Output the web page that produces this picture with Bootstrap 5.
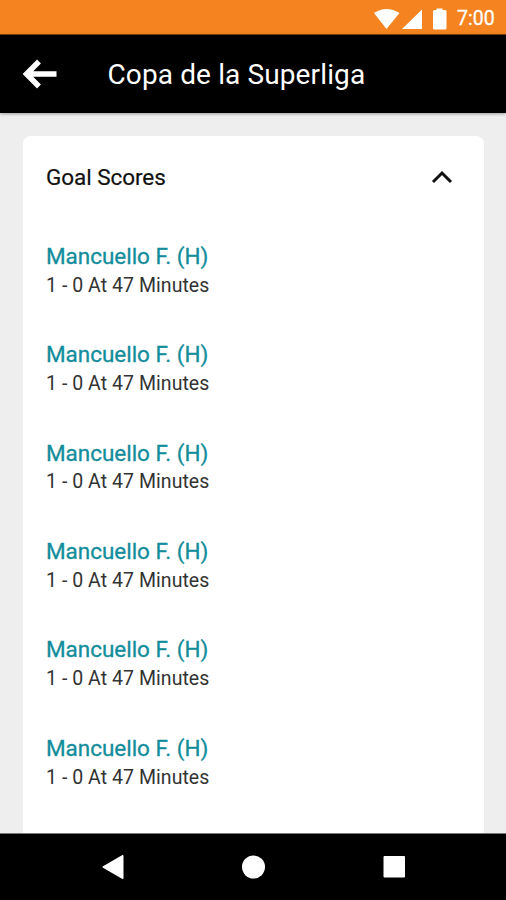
<!DOCTYPE html>
<html lang="en">
<head>
<meta charset="utf-8">
<meta name="viewport" content="width=device-width, initial-scale=1">
<title>Copa de la Superliga</title>
<link href="https://cdn.jsdelivr.net/npm/bootstrap@5.3.0/dist/css/bootstrap.min.css" rel="stylesheet">
<style>
body{font-family:Roboto,"Liberation Sans",sans-serif;background:#eee;height:900px;overflow:hidden}
svg{display:block;flex:none}
.status-bar{height:35px;background:#f58420;border-bottom:1px solid #7c430f;padding:1px 10px 0 0}
.status-bar .clock{font-size:19.5px;line-height:32px;margin:3px 0 0 10px;width:39px;white-space:nowrap;-webkit-text-stroke:.3px #fff}
.app-bar{height:78px;padding-left:22px;box-shadow:0 1px 3px rgba(0,0,0,.35);z-index:1}
.app-bar h1{font-size:28px;line-height:34px;font-weight:400;margin:1px 0 0 49.5px;letter-spacing:.12px}
.page-body{min-height:0;padding:23px 22px 0 23px}
.score-card{border-radius:8px 8px 0 0}
.score-head{height:83px;padding:0 31px 2px 23px}
.score-head h2{font-size:22.5px;line-height:28px;font-weight:400;margin:0;color:#111;letter-spacing:-.06px;-webkit-text-stroke:.2px #111}
.goal{height:98.4px;padding:22.8px 23px 0}
.goal .player{font-size:22.5px;line-height:28px;color:#138d9b;letter-spacing:-.03px;-webkit-text-stroke:.3px #138d9b}
.goal .minute{font-size:19.5px;line-height:28px;color:#333;margin-top:1.8px;letter-spacing:.05px}
.nav-keys{height:67px;border-top:1px solid #777;padding-left:2px}
</style>
<script src="https://cdn.jsdelivr.net/npm/bootstrap@5.3.0/dist/js/bootstrap.bundle.min.js" defer></script>
</head>
<body class="d-flex flex-column m-0">
<div class="status-bar d-flex align-items-center justify-content-end text-white flex-shrink-0">
<svg width="74" height="32" viewBox="373 0 74 32" fill="#fff"><path d="M374 11Q386.500 3 399.500 11L386.500 27ZM402 27L422 7.500V27ZM433 9.500q0-1.500 1.500-1.500H436.500V6.500h6V8h2.500q1.500 0 1.500 1.500V26q0 1.500-1.500 1.500H434.500Q433 27.500 433 26Z"/></svg>
<span class="clock">7:00</span>
</div>
<header class="app-bar d-flex align-items-center bg-black text-white flex-shrink-0 position-relative">
<svg width="36" height="32" viewBox="0 0 36 32" fill="none" stroke="#fff" stroke-width="5.500"><path d="M17 3.500L4.500 16L17 28.500M4 16H34.500"/></svg>
<h1>Copa de la Superliga</h1>
</header>
<main class="page-body flex-grow-1 overflow-hidden">
<section class="score-card card border-0 bg-white">
<div class="score-head d-flex align-items-center justify-content-between">
<h2>Goal Scores</h2>
<svg width="22" height="14" viewBox="0 0 22 14" fill="none" stroke="#111" stroke-width="3"><path d="M2 12L11 3L20 12"/></svg>
</div>
<ul class="list-unstyled mb-0">
<li class="goal"><div class="player">Mancuello F. (H)</div><div class="minute">1 - 0 At 47 Minutes</div></li>
<li class="goal"><div class="player">Mancuello F. (H)</div><div class="minute">1 - 0 At 47 Minutes</div></li>
<li class="goal"><div class="player">Mancuello F. (H)</div><div class="minute">1 - 0 At 47 Minutes</div></li>
<li class="goal"><div class="player">Mancuello F. (H)</div><div class="minute">1 - 0 At 47 Minutes</div></li>
<li class="goal"><div class="player">Mancuello F. (H)</div><div class="minute">1 - 0 At 47 Minutes</div></li>
<li class="goal"><div class="player">Mancuello F. (H)</div><div class="minute">1 - 0 At 47 Minutes</div></li>
<li class="goal"></li>
</ul>
</section>
</main>
<nav class="nav-keys bg-black flex-shrink-0 d-flex justify-content-center align-items-center">
<svg width="304" height="24" viewBox="102 855 304 24" fill="#fff" stroke="#fff" stroke-linejoin="round"><path stroke-width="2" d="M103.500 867L122.500 856V878Z"/><circle cx="253.500" cy="867" r="11.500" stroke="none"/><path stroke-width="1" d="M384 856.500h20.500v20.500h-20.500Z"/></svg>
</nav>
</body>
</html>
